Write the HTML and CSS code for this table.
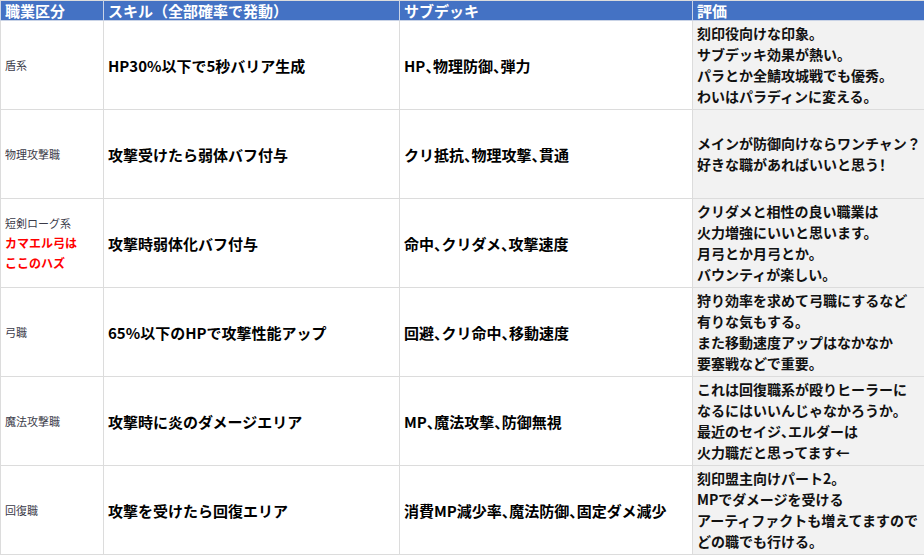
FILE: index.html
```html
<!DOCTYPE html>
<html lang="ja">
<head>
<meta charset="utf-8">
<link rel="stylesheet" href="styles.css">
</head>
<body>
<table class="sheet">
  <colgroup>
    <col class="c1"><col class="c2"><col class="c3"><col class="c4">
  </colgroup>
  <thead>
    <tr class="head">
      <th>職業区分</th>
      <th>スキル（全部確率で発動）</th>
      <th>サブデッキ</th>
      <th>評価</th>
    </tr>
  </thead>
  <tbody>
    <tr>
      <td class="job">盾系</td>
      <td class="skill">HP30%以下で5秒バリア生成</td>
      <td class="sub">HP<span class="p">、</span>物理防御<span class="p">、</span>弾力</td>
      <td class="eval">刻印役向けな印象。<br>サブデッキ効果が熱い。<br>パラとか全鯖攻城戦でも優秀。<br>わいはパラディンに変える。</td>
    </tr>
    <tr>
      <td class="job">物理攻撃職</td>
      <td class="skill">攻撃受けたら弱体バフ付与</td>
      <td class="sub">クリ抵抗<span class="p">、</span>物理攻撃<span class="p">、</span>貫通</td>
      <td class="eval">メインが防御向けならワンチャン<span class="p">？</span><br>好きな職があればいいと思う<span class="p">！</span></td>
    </tr>
    <tr>
      <td class="job">短剣ローグ系<br><span class="note">カマエル弓は<br>ここのハズ</span></td>
      <td class="skill">攻撃時弱体化バフ付与</td>
      <td class="sub">命中<span class="p">、</span>クリダメ<span class="p">、</span>攻撃速度</td>
      <td class="eval">クリダメと相性の良い職業は<br>火力増強にいいと思います。<br>月弓とか月弓とか。<br>バウンティが楽しい。</td>
    </tr>
    <tr>
      <td class="job">弓職</td>
      <td class="skill">65%以下のHPで攻撃性能アップ</td>
      <td class="sub">回避<span class="p">、</span>クリ命中<span class="p">、</span>移動速度</td>
      <td class="eval">狩り効率を求めて弓職にするなど<br>有りな気もする。<br>また移動速度アップはなかなか<br>要塞戦などで重要。</td>
    </tr>
    <tr>
      <td class="job">魔法攻撃職</td>
      <td class="skill">攻撃時に炎のダメージエリア</td>
      <td class="sub">MP<span class="p">、</span>魔法攻撃<span class="p">、</span>防御無視</td>
      <td class="eval">これは回復職系が殴りヒーラーに<br>なるにはいいんじゃなかろうか。<br>最近のセイジ<span class="p">、</span>エルダーは<br>火力職だと思ってます←</td>
    </tr>
    <tr>
      <td class="job">回復職</td>
      <td class="skill">攻撃を受けたら回復エリア</td>
      <td class="sub">消費MP減少率<span class="p">、</span>魔法防御<span class="p">、</span>固定ダメ減少</td>
      <td class="eval">刻印盟主向けパート2。<br>MPでダメージを受ける<br>アーティファクトも増えてますので<br>どの職でも行ける。</td>
    </tr>
  </tbody>
</table>
</body>
</html>
```

FILE: styles.css
```css
html, body {
  margin: 0;
  padding: 0;
  background: #ffffff;
}

body {
  font-family: "Noto Sans CJK JP", "Noto Sans", sans-serif;
  color: #111111;
}

.sheet {
  border-collapse: collapse;
  table-layout: fixed;
  width: 924px;
}

.c1 { width: 103px; }
.c2 { width: 296px; }
.c3 { width: 293px; }
.c4 { width: 232px; }

.sheet th,
.sheet td {
  border: 1px solid #dcdcdc;
  padding: 0 4px;
  white-space: nowrap;
  overflow: hidden;
  text-align: left;
}

.head th {
  background: #4472c4;
  color: #ffffff;
  font-size: 15px;
  font-weight: 700;
  height: 19px;
  line-height: 19px;
  border-color: #c9d3e6;
  border-top-color: #dcdcdc;
}

.sheet td {
  height: 88px;
  vertical-align: middle;
}

.job {
  font-size: 11px;
  line-height: 19px;
  color: #3a3a48;
}

.note {
  color: #ff0000;
  font-size: 12px;
  font-weight: 700;
}

.skill,
.sub {
  font-size: 15px;
  font-weight: 700;
  color: #000000;
}

.p {
  font-feature-settings: "halt";
}

.eval {
  background: #f2f2f2;
  font-size: 14px;
  font-weight: 700;
  line-height: 21px;
  color: #111111;
}
```
